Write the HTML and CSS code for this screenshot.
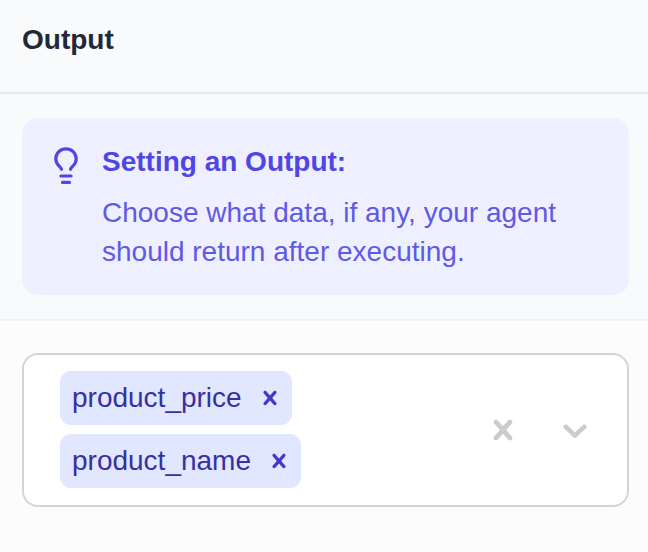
FILE: index.html
```html
<!DOCTYPE html>
<html lang="en">
<head>
<meta charset="utf-8">
<title>Output</title>
<link rel="stylesheet" href="styles.css">
</head>
<body>
<svg width="0" height="0" class="defs">
  <symbol id="cross" viewBox="0 0 20 20"><path d="M14.348 14.849c-0.469 0.469-1.229 0.469-1.697 0l-2.651-3.030-2.651 3.029c-0.469 0.469-1.229 0.469-1.697 0-0.469-0.469-0.469-1.229 0-1.697l2.758-3.15-2.759-3.152c-0.469-0.469-0.469-1.228 0-1.697s1.228-0.469 1.697 0l2.652 3.031 2.651-3.031c0.469-0.469 1.228-0.469 1.697 0s0.469 1.229 0 1.697l-2.758 3.152 2.758 3.15c0.469 0.469 0.469 1.229 0 1.698z"/></symbol>
</svg>
<header class="header"><h1 class="title">Output</h1></header>
<section class="info">
  <div class="callout">
    <svg class="bulb" viewBox="0 0 28 40"><path d="M9.5 23.3C9 21.8 8 20.9 6.6 19.5A10.2 9.9 0 1 1 21.4 19.5C20 20.9 19 21.8 18.5 23.3M8.9 30h10.2M10.5 36.4h7"/></svg>
    <div>
      <h2 class="callout-title">Setting an Output:</h2>
      <p class="callout-text">Choose what data, if any, your agent should return after executing.</p>
    </div>
  </div>
</section>
<main class="body">
  <div class="select">
    <div class="tags">
      <div class="tag"><span>product_price</span><svg class="remove"><use href="#cross"/></svg></div>
      <div class="tag"><span>product_name</span><svg class="remove"><use href="#cross"/></svg></div>
    </div>
    <div class="indicators">
      <svg class="indicator"><use href="#cross"/></svg>
      <svg class="indicator" viewBox="0 0 20 20"><path d="M4.516 7.548c0.436-0.446 1.043-0.481 1.576 0l3.908 3.747 3.908-3.747c0.533-0.481 1.141-0.446 1.574 0 0.436 0.445 0.408 1.197 0 1.615-0.406 0.418-4.695 4.502-4.695 4.502-0.217 0.223-0.502 0.335-0.787 0.335s-0.57-0.112-0.789-0.335c0 0-4.287-4.084-4.695-4.502s-0.436-1.17 0-1.615z"/></svg>
    </div>
  </div>
</main>
</body>
</html>
```
FILE: styles.css
```css
* { box-sizing: border-box; }
body {
  margin: 0;
  min-height: 552px;
  background: #fcfcfc;
  font-family: "Liberation Sans", Arial, sans-serif;
  font-size: 28px;
}
h1, h2, p { margin: 0; font-size: inherit; }
.defs { display: none; }
.header {
  height: 94px;
  padding: 20px 22px 0;
  background: #f9fafc;
  border-bottom: 2px solid #e5e7eb;
}
.title { color: #1f2937; line-height: 40px; }
.info {
  height: 227px;
  padding: 24px 19px 24px 22px;
  background: #f9fafc;
  border-bottom: 2px solid #f1f2f5;
}
.callout {
  display: flex;
  gap: 22px;
  height: 177px;
  padding: 24px 30px;
  border-radius: 16px;
  background: #eef0ff;
  color: #4f46e5;
}
.bulb {
  flex: none;
  width: 28px;
  height: 40px;
  margin-top: 4px;
  fill: none;
  stroke: #4f46e5;
  stroke-width: 3.2;
  stroke-linecap: round;
  stroke-linejoin: round;
}
.callout-title { line-height: 40px; }
.callout-text { margin-top: 11px; line-height: 39px; color: #6059e5; }
.body { padding: 32px 19px 0 22px; }
.select {
  display: flex;
  justify-content: space-between;
  align-items: center;
  height: 154px;
  padding: 0 32px 0 36px;
  border: 2px solid #d1d5db;
  border-radius: 16px;
  background: #fff;
}
.tags {
  display: flex;
  flex-direction: column;
  align-items: flex-start;
  gap: 9px;
  padding-bottom: 2px;
}
.tag {
  display: flex;
  align-items: center;
  height: 54px;
  padding: 0 8px 0 12px;
  border-radius: 11px;
  background: #e0e7ff;
  color: #3730a3;
}
.remove { width: 28px; height: 28px; margin-left: 14px; fill: #4338ca; }
.indicators { display: flex; gap: 32px; }
.indicator { width: 40px; height: 40px; fill: #ccc; }
```
